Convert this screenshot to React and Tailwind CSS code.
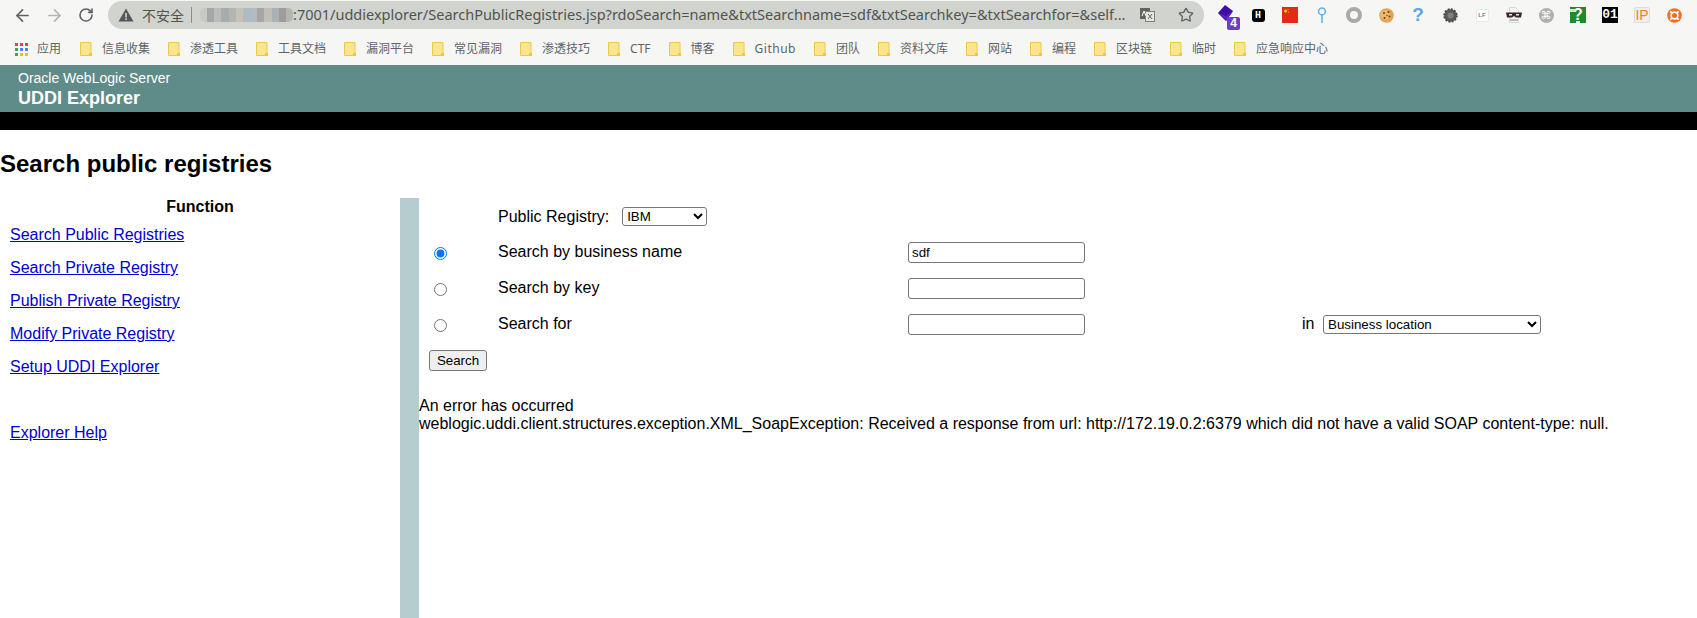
import React from 'react';
import { ArrowLeft, ArrowRight, RotateCw, Star } from 'lucide-react';

const bookmarks = ['信息收集', '渗透工具', '工具文档', '漏洞平台', '常见漏洞', '渗透技巧', 'CTF', '博客', 'Github', '团队', '资料文库', '网站', '编程', '区块链', '临时', '应急响应中心'];
const links = ['Search Public Registries', 'Search Private Registry', 'Publish Private Registry', 'Modify Private Registry', 'Setup UDDI Explorer'];
const mosaic = ['#c6c9c6', '#a4a7a7', '#babdba', '#a9acac', '#b4b5b1', '#c4c2b8', '#aebcc0', '#b0bcc0', '#a8a5a5', '#c0beb5', '#a9b2b5', '#a09c9c', '#b4b6b2'];
const appDots = ['#ea4335', '#ea4335', '#ea4335', '#34a853', '#4285f4', '#4285f4', '#34a853', '#fbbc04', '#fbbc04'];

function Folder() {
  return (
    <svg width="12" height="14" viewBox="0 0 12 14" className="shrink-0">
      <path d="M.5.5h10.5v13H.5z" fill="#fde58f" stroke="#efc64c" />
      <path d="M9 11h3v3H9z" fill="#efc64c" />
    </svg>
  );
}

function Extension({ children }) {
  return <div className="relative w-8 h-[30px] flex items-center justify-center shrink-0">{children}</div>;
}

function Toolbar() {
  return (
    <div className="h-[33px] flex items-center pl-[6px] pb-[3px]">
      <div className="w-8 flex justify-center"><ArrowLeft size={19} color="#5f6368" strokeWidth={2.2} /></div>
      <div className="w-8 flex justify-center"><ArrowRight size={19} color="#b4b6b6" strokeWidth={2.2} /></div>
      <div className="w-8 flex justify-center"><RotateCw size={16} color="#5f6368" strokeWidth={2.4} /></div>
      <div className="ml-[6px] w-[1096px] h-7 rounded-full bg-[#d0d3ce] flex items-center pl-[10px] text-[14px] text-[#50544f] font-['Noto_Sans','Noto_Sans_CJK_SC',sans-serif] whitespace-nowrap">
        <svg width="16" height="16" viewBox="0 0 16 16" className="shrink-0">
          <path d="M8 1.5 15.5 14.5H.5z" fill="#54575a" />
          <path d="M7.2 6h1.6v4.5H7.2zM7.2 11.3h1.6v1.6H7.2z" fill="#d0d3ce" />
        </svg>
        <span className="ml-2 w-[42px] shrink-0">不安全</span>
        <div className="ml-[7px] w-px h-4 bg-[#8a8d88] shrink-0" />
        <div className="ml-2 flex h-[14px] w-[93px] shrink-0 rounded-[5px] overflow-hidden blur-[0.6px]">
          {mosaic.map((c, i) => <div key={i} className="flex-1" style={{ backgroundColor: c }} />)}
        </div>
        <span className="w-[834px] shrink-0 text-[14.5px]">:7001/uddiexplorer/SearchPublicRegistries.jsp?rdoSearch=name&amp;txtSearchname=sdf&amp;txtSearchkey=&amp;txtSearchfor=&amp;self...</span>
        <svg width="15" height="14" viewBox="0 0 15 14" className="ml-[13px] shrink-0">
          <rect x="0" y="0" width="10" height="11" fill="#62655f" />
          <rect x="5.5" y="3.5" width="9" height="10" fill="#e4e5e2" stroke="#7d807c" />
          <path d="M2 8l2-5 2 5" stroke="#fff" fill="none" strokeWidth="1" />
          <path d="M8 6l4 5M12 6l-4 5" stroke="#62655f" fill="none" strokeWidth="1" />
        </svg>
        <Star size={16} color="#5f6368" strokeWidth={2} className="ml-[23px] shrink-0" />
      </div>
      <div className="ml-[6px] flex">
        <Extension>
          <svg width="18" height="17" viewBox="0 0 18 17" className="-mt-[3px] -ml-[1px]">
            <path d="M8 0l8 6-7 10-8-8z" fill="#3d0fa8" />
            <path d="M1 8l8 3 7-5-7 10z" fill="#5a22c4" />
          </svg>
          <span className="absolute left-[17px] top-[17px] w-[13px] h-[13px] rounded-[2px] bg-[#6b3fc4] text-white text-[12px] leading-[13px] text-center font-bold font-['Liberation_Sans',sans-serif]">4</span>
        </Extension>
        <Extension>
          <div className="w-[13px] h-[13px] rounded-[3px] bg-black text-white text-[10px] leading-[13px] text-center font-bold font-['Liberation_Mono',monospace]">H</div>
        </Extension>
        <Extension>
          <svg width="16" height="16" viewBox="0 0 16 16"><path d="M0 0h16v16H0z" fill="#e32a14" /><circle cx="3.5" cy="4" r="1.6" fill="#f5d60a" /><circle cx="6" cy="2.5" r=".6" fill="#f5d60a" /><circle cx="6.6" cy="5" r=".6" fill="#f5d60a" /></svg>
        </Extension>
        <Extension>
          <svg width="10" height="16" viewBox="0 0 10 16"><circle cx="5" cy="4.4" r="3.4" fill="none" stroke="#62b1ef" strokeWidth="1.6" /><path d="M5 8v8" stroke="#62b1ef" strokeWidth="1.6" /></svg>
        </Extension>
        <Extension>
          <svg width="16" height="16" viewBox="0 0 16 16"><circle cx="8" cy="8" r="6" fill="none" stroke="#a9a9a9" strokeWidth="4" /></svg>
        </Extension>
        <Extension>
          <svg width="15" height="15" viewBox="0 0 15 15"><circle cx="7.5" cy="7.5" r="7.3" fill="#e3a456" /><circle cx="6" cy="7" r="5" fill="#eeb96f" /><circle cx="5" cy="5" r="1" fill="#6a3b12" /><circle cx="9.5" cy="4" r="1" fill="#6a3b12" /><circle cx="10.5" cy="8.5" r="1" fill="#6a3b12" /><circle cx="5.5" cy="10" r="1" fill="#6a3b12" /><circle cx="8" cy="7.5" r=".7" fill="#6a3b12" /></svg>
        </Extension>
        <Extension>
          <span className="text-[#5aa7e4] text-[19px] font-bold font-['Liberation_Sans',sans-serif]">?</span>
        </Extension>
        <Extension>
          <svg width="15" height="15" viewBox="0 0 15 15"><circle cx="7.5" cy="7.5" r="6.2" fill="#5b5b5b" stroke="#4a4a4a" strokeWidth="2" strokeDasharray="2 1.2" /><circle cx="7.5" cy="7.5" r="3" fill="#808080" /></svg>
        </Extension>
        <Extension>
          <div className="w-[13px] h-[13px] bg-white rounded-[2px] border border-[#e8e8e8] text-[#6b7f99] text-[6px] leading-[11px] text-center font-bold font-['Liberation_Sans',sans-serif]">LF</div>
        </Extension>
        <Extension>
          <svg width="16" height="16" viewBox="0 0 16 16">
            <path d="M3.500.5h6l3 3v12h-9z" fill="#f4f4f4" stroke="#d8d8d8" />
            <path d="M0 5.500h16l-1 5H10L8 9l-2 1.500H1z" fill="#3a2626" />
            <path d="M3 7h3v1.500H3zM10 7h3v1.500h-3z" fill="#f0e6e6" />
            <path d="M4 13h8" stroke="#a8a8a8" strokeWidth="1.500" />
          </svg>
        </Extension>
        <Extension>
          <div className="w-[15px] h-[15px] rounded-full bg-[#b0b0b0] text-white text-[11px] leading-[15px] text-center font-['DejaVu_Sans',sans-serif]">⌘</div>
        </Extension>
        <Extension>
          <div className="relative w-4 h-4 bg-[#1f8a2a] text-white text-[16px] leading-4 text-center font-bold font-['Liberation_Sans',sans-serif]">
            ?
            <div className="absolute left-0 top-[2px] w-[6px] h-[3px] bg-[#cfe8cf]" />
            <div className="absolute left-[6px] bottom-0 w-[4px] h-[2px] bg-white" />
          </div>
        </Extension>
        <Extension>
          <div className="w-4 h-4 bg-black text-white text-[13px] leading-4 text-center font-bold font-['Liberation_Mono',monospace]">01</div>
        </Extension>
        <Extension>
          <div className="w-4 h-4 bg-[#efefef] border border-[#dcdcdc] rounded-[2px] text-[#f58220] text-[14px] leading-[14px] text-center font-['Liberation_Sans',sans-serif]">IP</div>
        </Extension>
        <Extension>
          <svg width="15" height="15" viewBox="0 0 16 16"><circle cx="8" cy="8" r="7.8" fill="#f26f21" /><circle cx="8" cy="8" r="3.6" fill="none" stroke="#fff" strokeWidth="1.800" /><path d="M3.500 3.500l2 2M12.500 3.500l-2 2M3.500 12.500l2-2M12.500 12.500l-2-2" stroke="#fff" strokeWidth="1.800" /></svg>
        </Extension>
      </div>
    </div>
  );
}

function BookmarksBar() {
  return (
    <div className="h-8 flex items-center pl-[15px] pb-[2px] text-[12px] text-[#5f6368] font-['Noto_Sans','Noto_Sans_CJK_SC',sans-serif] border-b border-[#b7bbb6] box-content whitespace-nowrap">
      <div className="grid grid-cols-3 gap-[2px] w-[13px] h-[13px] shrink-0">
        {appDots.map((c, i) => <div key={i} style={{ backgroundColor: c }} />)}
      </div>
      <span className="ml-[9px] mr-[19px]">应用</span>
      {bookmarks.map(name => (
        <div key={name} className="flex items-center mr-[18px]">
          <Folder />
          <span className={name === 'Github' ? 'ml-[10px] tracking-[0.5px]' : 'ml-[10px]'}>{name}</span>
        </div>
      ))}
    </div>
  );
}

export default function App() {
  return (
    <div className="h-[618px] w-[1697px] overflow-hidden flex flex-col bg-white text-black font-['Liberation_Sans',Arial,sans-serif]">
      <div className="bg-[#f6f7f5] shrink-0 h-[65px]">
        <Toolbar />
        <BookmarksBar />
      </div>

      <header className="h-[47px] bg-[#5f8b89] text-white pl-[18px] shrink-0">
        <div className="text-[14px] leading-4 pt-[5px]">Oracle WebLogic Server</div>
        <div className="text-[18px] leading-5 font-bold mt-[2px]">UDDI Explorer</div>
      </header>
      <div className="h-[18px] bg-black shrink-0" />

      <h2 className="h-[68px] pt-[20px] text-[24px] leading-7 font-bold shrink-0">Search public registries</h2>

      <div className="flex flex-1 min-h-0">
        <aside className="w-[400px] shrink-0">
          <div className="text-center font-bold leading-[18px] mb-[10px] text-[16px]">Function</div>
          {links.map(link => (
            <div key={link} className="h-[33px] pl-[10px] leading-[18px] text-[16px]">
              <a href="#" className="text-[#0000d0] underline">{link}</a>
            </div>
          ))}
          <div className="h-[33px]" />
          <div className="pl-[10px] leading-[18px] text-[16px]">
            <a href="#" className="text-[#0000d0] underline">Explorer Help</a>
          </div>
        </aside>
        <div className="w-[19px] bg-[#b5cdcf] shrink-0" />

        <main className="flex-1 text-[16px] leading-[18px]">
          <div className="grid grid-cols-[79px_410px_394px_auto] auto-rows-[36px] items-center">
            <div />
            <div className="col-span-3 flex items-center">
              <span className="mt-[2px]">Public Registry:</span>
              <select className="ml-[13px] w-[85px] h-[19px] bg-white border border-[#767676] rounded-[3px] text-[13.33px] leading-none" defaultValue="IBM">
                <option>IBM</option>
              </select>
            </div>

            <input type="radio" name="rdoSearch" defaultChecked className="ml-[15px] mt-[2px] w-[13px] h-[13px]" />
            <div className="-mt-px">Search by business name</div>
            <div><input type="text" defaultValue="sdf" className="block w-[177px] h-[21px] border border-[#767676] rounded-[3px] bg-white px-[3px] text-[13.33px]" /></div>
            <div />

            <input type="radio" name="rdoSearch" className="ml-[15px] mt-[2px] w-[13px] h-[13px]" />
            <div className="-mt-px">Search by key</div>
            <div><input type="text" className="block w-[177px] h-[21px] border border-[#767676] rounded-[3px] bg-white px-[3px] text-[13.33px]" /></div>
            <div />

            <input type="radio" name="rdoSearch" className="ml-[15px] mt-[2px] w-[13px] h-[13px]" />
            <div className="-mt-px">Search for</div>
            <div><input type="text" className="block w-[177px] h-[21px] border border-[#767676] rounded-[3px] bg-white px-[3px] text-[13.33px]" /></div>
            <div className="flex items-center">
              <span className="w-[21px]">in</span>
              <select className="w-[218px] h-[19px] bg-white border border-[#767676] rounded-[3px] text-[13.33px] leading-none" defaultValue="Business location">
                <option>Business location</option>
              </select>
            </div>
          </div>

          <button type="button" className="block ml-[10px] mt-2 w-[58px] h-[21px] bg-[#efefef] border border-[#767676] rounded-[3px] text-[13.33px] leading-none text-black">Search</button>

          <div className="mt-[26px]">
            <div>An error has occurred</div>
            <div className="whitespace-nowrap">weblogic.uddi.client.structures.exception.XML_SoapException: Received a response from url: http://172.19.0.2:6379 which did not have a valid SOAP content-type: null.</div>
          </div>
        </main>
      </div>
    </div>
  );
}
